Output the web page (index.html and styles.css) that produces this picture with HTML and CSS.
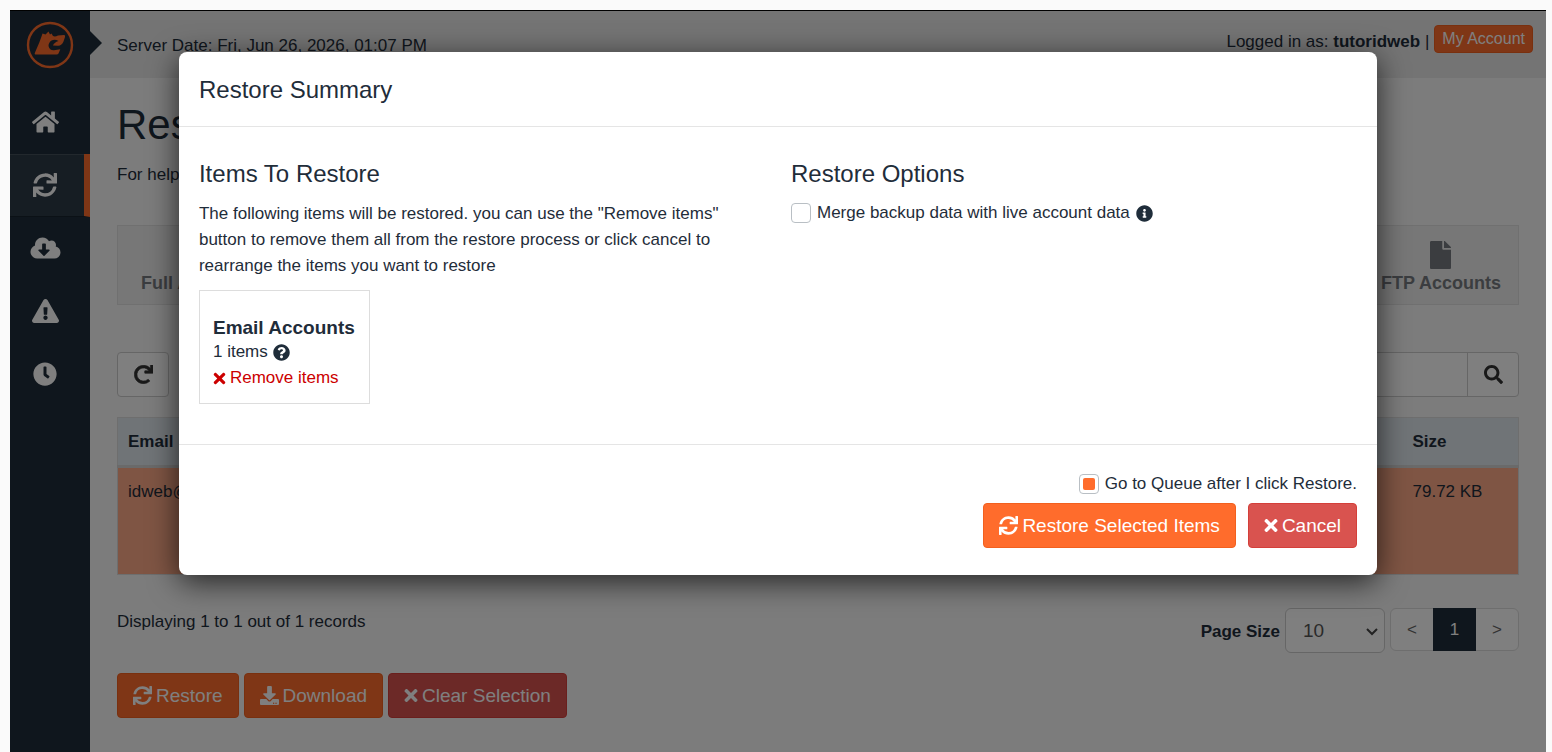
FILE: index.html
```
<!doctype html>
<html lang="en">
  <head>
    <meta charset="UTF-8" />
    <meta name="viewport" content="width=device-width, initial-scale=1.0" />
    <title>Restore &amp; Download</title>
    <link rel="stylesheet" href="styles.css">
  </head>
  <body>
    <!-- Shared icons -->
    <svg class="sprite" aria-hidden="true">
      <symbol id="i-home" viewBox="0 0 576 512"><path d="M280.37 148.26L96 300.11V464a16 16 0 0 0 16 16l112.06-.29a16 16 0 0 0 15.92-16V368a16 16 0 0 1 16-16h64a16 16 0 0 1 16 16v95.64a16 16 0 0 0 16 16.05L464 480a16 16 0 0 0 16-16V300L295.67 148.26a12.19 12.19 0 0 0-15.3 0zM571.6 251.47L488 182.56V44.05a12 12 0 0 0-12-12h-56a12 12 0 0 0-12 12v72.61L318.47 43a48 48 0 0 0-61 0L4.34 251.47a12 12 0 0 0-1.6 16.9l25.5 31A12 12 0 0 0 45.15 301l235.22-193.74a12.19 12.19 0 0 1 15.3 0L530.9 301a12 12 0 0 0 16.9-1.6l25.5-31a12 12 0 0 0-1.7-16.93z"/></symbol>
      <symbol id="i-sync" viewBox="0 0 512 512"><path d="M440.65 12.57l4 82.77A247.16 247.16 0 0 0 255.83 8C134.73 8 33.91 94.92 12.29 209.82A12 12 0 0 0 24.09 224h49.05a12 12 0 0 0 11.67-9.26 175.91 175.91 0 0 1 317-56.94l-101.46-4.86a12 12 0 0 0-12.57 12v47.41a12 12 0 0 0 12 12H500a12 12 0 0 0 12-12V12a12 12 0 0 0-12-12h-47.37a12 12 0 0 0-11.98 12.57zM255.83 432a175.61 175.61 0 0 1-146-77.8l101.8 4.87a12 12 0 0 0 12.57-12v-47.4a12 12 0 0 0-12-12H12a12 12 0 0 0-12 12V500a12 12 0 0 0 12 12h47.35a12 12 0 0 0 12-12.6l-4.15-82.57A247.17 247.17 0 0 0 255.83 504c121.11 0 221.93-86.92 243.55-201.82a12 12 0 0 0-11.8-14.18h-49.05a12 12 0 0 0-11.67 9.26A175.86 175.86 0 0 1 255.83 432z"/></symbol>
      <symbol id="i-cloud" viewBox="0 0 640 512"><path d="M537.6 226.6c4.1-10.7 6.4-22.4 6.4-34.6 0-53-43-96-96-96-19.7 0-38.1 6-53.3 16.2C367 64.2 315.3 32 256 32c-88.4 0-160 71.6-160 160 0 2.7.1 5.4.2 8.1C40.2 219.8 0 273.2 0 336c0 79.5 64.5 144 144 144h368c70.7 0 128-57.3 128-128 0-61.9-44-113.6-102.4-125.4zm-132.9 88.7L299.3 420.7c-6.2 6.2-16.4 6.2-22.6 0L171.3 315.3c-10.1-10.1-2.9-27.3 11.3-27.3H248V176c0-8.8 7.2-16 16-16h48c8.8 0 16 7.2 16 16v112h65.4c14.2 0 21.4 17.2 11.3 27.3z"/></symbol>
      <symbol id="i-alert" viewBox="0 0 576 512"><path d="M569.517 440.013C587.975 472.007 564.806 512 527.94 512H48.054c-36.937 0-59.999-40.055-41.577-71.987L246.423 23.985c18.467-32.009 64.72-31.951 83.154 0l239.94 416.028zM288 354c-25.405 0-46 20.595-46 46s20.595 46 46 46 46-20.595 46-46-20.595-46-46-46zm-43.673-165.346l7.418 136c.347 6.364 5.609 11.346 11.982 11.346h48.546c6.373 0 11.635-4.982 11.982-11.346l7.418-136c.375-6.874-5.098-12.654-11.982-12.654h-63.383c-6.884 0-12.356 5.78-11.981 12.654z"/></symbol>
      <symbol id="i-clock" viewBox="0 0 512 512"><path d="M256,8C119,8,8,119,8,256S119,504,256,504,504,393,504,256,393,8,256,8Zm92.49,313h0l-20,25a16,16,0,0,1-22.49,2.5h0l-67-49.72a40,40,0,0,1-15-31.23V112a16,16,0,0,1,16-16h32a16,16,0,0,1,16,16V256l58,42.5A16,16,0,0,1,348.49,321Z"/></symbol>
      <symbol id="i-redo" viewBox="0 0 512 512"><path d="M500.33 0h-47.41a12 12 0 0 0-12 12.57l4 82.76A247.42 247.42 0 0 0 256 8C119.34 8 7.9 119.53 8 256.19 8.1 393.07 119.1 504 256 504a247.1 247.1 0 0 0 166.18-63.91 12 12 0 0 0 .48-17.43l-34-34a12 12 0 0 0-16.38-.55A176 176 0 1 1 402.1 157.8l-101.53-4.87a12 12 0 0 0-12.57 12v47.41a12 12 0 0 0 12 12h200.33a12 12 0 0 0 12-12V12a12 12 0 0 0-12-12z" stroke="currentColor" stroke-width="16"/></symbol>
      <symbol id="i-file" viewBox="0 0 384 512"><path d="M224 136V0H24C10.7 0 0 10.7 0 24v464c0 13.3 10.7 24 24 24h336c13.3 0 24-10.7 24-24V160H248c-13.2 0-24-10.8-24-24zm160-14.1v6.1H256V0h6.1c6.4 0 12.5 2.5 17 7l97.9 98c4.5 4.5 7 10.6 7 16.9z"/></symbol>
      <symbol id="i-search" viewBox="0 0 512 512"><path d="M505 442.7L405.3 343c-4.5-4.5-10.6-7-17-7H372c27.6-35.3 44-79.7 44-128C416 93.1 322.9 0 208 0S0 93.1 0 208s93.1 208 208 208c48.3 0 92.7-16.4 128-44v16.3c0 6.4 2.5 12.5 7 17l99.7 99.7c9.4 9.4 24.6 9.4 33.9 0l28.3-28.3c9.4-9.4 9.4-24.6.1-34zM208 336c-70.7 0-128-57.2-128-128 0-70.7 57.2-128 128-128 70.7 0 128 57.2 128 128 0 70.7-57.2 128-128 128z"/></symbol>
      <symbol id="i-times" viewBox="0 0 352 512"><path d="M242.72 256l100.07-100.07c12.28-12.28 12.28-32.19 0-44.48l-22.24-22.24c-12.28-12.28-32.19-12.28-44.48 0L176 189.28 75.93 89.21c-12.28-12.28-32.19-12.28-44.48 0L9.21 111.45c-12.28 12.28-12.28 32.19 0 44.48L109.28 256 9.21 356.07c-12.28 12.28-12.28 32.19 0 44.48l22.24 22.24c12.28 12.28 32.2 12.28 44.48 0L176 322.72l100.07 100.07c12.28 12.28 32.2 12.28 44.48 0l22.24-22.24c12.28-12.28 12.28-32.19 0-44.48L242.72 256z"/></symbol>
      <symbol id="i-download" viewBox="0 0 512 512"><path d="M216 0h80c13.3 0 24 10.7 24 24v168h87.7c17.8 0 26.7 21.5 14.1 34.1L269.7 378.3c-7.5 7.5-19.8 7.5-27.3 0L90.1 226.1c-12.6-12.6-3.7-34.1 14.1-34.1H192V24c0-13.3 10.7-24 24-24zm296 376v112c0 13.3-10.7 24-24 24H24c-13.3 0-24-10.7-24-24V376c0-13.3 10.7-24 24-24h146.7l49 49c20.1 20.1 52.5 20.1 72.6 0l49-49H488c13.3 0 24 10.7 24 24zm-124 88c0-11-9-20-20-20s-20 9-20 20 9 20 20 20 20-9 20-20zm64 0c0-11-9-20-20-20s-20 9-20 20 9 20 20 20 20-9 20-20z"/></symbol>
      <symbol id="i-question" viewBox="0 0 512 512"><path d="M504 256c0 136.997-111.043 248-248 248S8 392.997 8 256C8 119.083 119.043 8 256 8s248 111.083 248 248zM262.655 90c-54.497 0-89.255 22.957-116.549 63.758-3.536 5.286-2.353 12.415 2.715 16.258l34.699 26.31c5.205 3.947 12.621 3.008 16.665-2.122 17.864-22.658 30.113-35.797 57.303-35.797 20.429 0 45.698 13.148 45.698 32.958 0 14.976-12.363 22.667-32.534 33.976C247.128 238.528 216 254.941 216 296v4c0 6.627 5.373 12 12 12h56c6.627 0 12-5.373 12-12v-1.333c0-28.462 83.186-29.647 83.186-106.667 0-58.002-60.165-102-116.531-102zM256 338c-25.365 0-46 20.635-46 46 0 25.364 20.635 46 46 46s46-20.636 46-46c0-25.365-20.635-46-46-46z"/></symbol>
      <symbol id="i-info" viewBox="0 0 512 512"><path d="M256 8C119.043 8 8 119.083 8 256c0 136.997 111.043 248 248 248s248-111.003 248-248C504 119.083 392.957 8 256 8zm0 110c23.196 0 42 18.804 42 42s-18.804 42-42 42-42-18.804-42-42 18.804-42 42-42zm56 254c0 6.627-5.373 12-12 12h-88c-6.627 0-12-5.373-12-12v-24c0-6.627 5.373-12 12-12h12v-64h-12c-6.627 0-12-5.373-12-12v-24c0-6.627 5.373-12 12-12h64c6.627 0 12 5.373 12 12v100h12c6.627 0 12 5.373 12 12v24z"/></symbol>
    </svg>

    <div class="app">
      <nav class="sidebar">
        <a href="#" class="logo" aria-label="JetBackup">
          <svg viewBox="0 0 48 48" width="48" height="48">
            <circle cx="24" cy="24" r="22" fill="none" stroke="#ff6c2c" stroke-width="2.4"/>
            <path fill="#ff6c2c" d="M10 33.500Q8 33.500 9 31.500L13.300 21.500L15.500 15.500L16.500 12.500L19.500 13.500L22.500 10.500L24 13.500L25.500 12.500L27 15Q29 16 32 14.500L38 14Q39.500 14 39 16L37.500 20.500Q36 24.500 32 24.800L27 24.500Q28 21.500 32.500 20Q29 18 25.500 19.500Q22.500 21.500 22.500 25Q23.500 29.500 28 29.200L34.300 28.200L32.500 32.500Q32 33.500 30.500 33.500Z"/>
          </svg>
        </a>
        <a href="#" class="side-link" aria-label="Home"><svg class="icon wide"><use href="#i-home"/></svg></a>
        <a href="#" class="side-link active" aria-label="Restore"><svg class="icon"><use href="#i-sync"/></svg></a>
        <a href="#" class="side-link" aria-label="Downloads"><svg class="icon wider"><use href="#i-cloud"/></svg></a>
        <a href="#" class="side-link" aria-label="Alerts"><svg class="icon wide"><use href="#i-alert"/></svg></a>
        <a href="#" class="side-link" aria-label="Queue"><svg class="icon"><use href="#i-clock"/></svg></a>
      </nav>

      <div class="main">
        <header class="topbar">
          <span class="date">Server Date: Fri, Jun 26, 2026, 01:07 PM</span>
          <div class="user">
            <span>Logged in as: <strong>tutoridweb</strong> |</span>
            <a href="#" class="account">My Account</a>
          </div>
        </header>

        <div class="content">
          <h1>Restore</h1>
          <p class="help">For help</p>

          <div class="tabs">
            <a href="#" class="tab">Full A</a>
            <a href="#" class="tab"><svg class="tab-icon"><use href="#i-file"/></svg>FTP Accounts</a>
          </div>

          <div class="toolbar">
            <button class="tool" aria-label="Reload"><svg class="icon-md"><use href="#i-redo"/></svg></button>
            <div class="search">
              <input type="text" aria-label="Search">
              <button aria-label="Search"><svg class="icon-md"><use href="#i-search"/></svg></button>
            </div>
          </div>

          <table class="records">
            <thead>
              <tr><th>Email</th><th class="size">Size</th></tr>
            </thead>
            <tbody>
              <tr><td>idweb@</td><td>79.72 KB</td></tr>
            </tbody>
          </table>

          <div class="table-footer">
            <p class="count">Displaying 1 to 1 out of 1 records</p>
            <div class="paging">
              <label for="pageSize">Page Size</label>
              <div class="select">
                <select id="pageSize"><option>10</option></select>
                <svg viewBox="0 0 12 12" width="12" height="12"><path d="M1 3l5 5 5-5" fill="none" stroke="#444" stroke-width="2"/></svg>
              </div>
              <div class="pager">
                <button aria-label="Previous">&lt;</button>
                <button class="current">1</button>
                <button aria-label="Next">&gt;</button>
              </div>
            </div>
          </div>

          <div class="actions">
            <button class="btn"><svg class="icon-md"><use href="#i-sync"/></svg>Restore</button>
            <button class="btn"><svg class="icon-md"><use href="#i-download"/></svg>Download</button>
            <button class="btn danger"><svg class="icon-x"><use href="#i-times"/></svg>Clear Selection</button>
          </div>
        </div>
      </div>

      <div class="overlay">
        <div class="modal" role="dialog" aria-labelledby="modalTitle">
          <div class="modal-header">
            <h2 id="modalTitle">Restore Summary</h2>
          </div>
          <div class="modal-body">
            <section>
              <h2>Items To Restore</h2>
              <p class="intro">The following items will be restored. you can use the "Remove items" button to remove them all from the restore process or click cancel to rearrange the items you want to restore</p>
              <div class="item-box">
                <h3>Email Accounts</h3>
                <div class="item-count">1 items <svg class="icon-sm"><use href="#i-question"/></svg></div>
                <a href="#" class="remove"><svg class="icon-xs"><use href="#i-times"/></svg>Remove items</a>
              </div>
            </section>
            <section>
              <h2>Restore Options</h2>
              <label class="check"><input type="checkbox">Merge backup data with live account data <svg class="icon-sm"><use href="#i-info"/></svg></label>
            </section>
          </div>
          <div class="modal-footer">
            <label class="check"><input type="checkbox" checked>Go to Queue after I click Restore.</label>
            <div class="modal-buttons">
              <button class="btn"><svg class="icon-md"><use href="#i-sync"/></svg>Restore Selected Items</button>
              <button class="btn danger"><svg class="icon-x"><use href="#i-times"/></svg>Cancel</button>
            </div>
          </div>
        </div>
      </div>
    </div>
  </body>
</html>
```
FILE: styles.css
```
* {
  box-sizing: border-box;
}
body {
  margin: 0;
  padding: 10px 6px 0 10px;
  background: #fafafa;
  color: #1f2d3a;
  font: 17px/26px "Liberation Sans", Arial, sans-serif;
}
h1,
h2,
h3,
p {
  margin: 0;
  font-weight: normal;
}
a {
  color: inherit;
  text-decoration: none;
}
button,
input,
select {
  font: inherit;
  color: inherit;
}
svg {
  fill: currentColor;
  flex-shrink: 0;
}
.sprite {
  display: none;
}
.app {
  position: relative;
  display: flex;
  min-height: calc(100vh - 10px);
  border-top: 1px solid #000;
  background: #f8f8f8;
}

/* Sidebar */
.sidebar {
  width: 80px;
  background: #1f2d3a;
  color: #fff;
}
.logo {
  display: block;
  position: relative;
  height: 80px;
  padding: 10px 16px;
}
.logo::after {
  content: "";
  position: absolute;
  left: 80px;
  top: 20px;
  border: 12px solid transparent;
  border-left-color: #1f2d3a;
  border-right: 0;
}
.side-link {
  display: flex;
  align-items: center;
  justify-content: center;
  height: 63px;
  padding: 0 10px 1px 0;
  border-bottom: 1px solid transparent;
}
.side-link.active {
  padding-right: 4px;
  border-right: 6px solid #ff6c2c;
  border-bottom-color: #17222c;
  background: #2d3a46;
  box-shadow: inset 0 1px #44505a;
}
.icon {
  width: 24px;
  height: 24px;
}
.icon.wide {
  width: 27px;
}
.icon.wider {
  width: 31px;
}
.icon-md {
  width: 19px;
  height: 19px;
}
.icon-x {
  width: 14px;
  height: 19px;
}
.icon-sm {
  width: 17px;
  height: 17px;
}
.icon-xs {
  width: 13px;
  height: 17px;
}

/* Page */
.main {
  flex: 1;
  min-width: 0;
}
.topbar {
  display: flex;
  align-items: flex-start;
  justify-content: space-between;
  height: 67px;
  padding: 14px 13px 0 27px;
  background: #e9e9e9;
}
.date {
  padding-top: 8px;
}
.user {
  display: flex;
  align-items: flex-start;
  gap: 5px;
  line-height: 34px;
}
.account {
  padding: 0 7px;
  border: 1px solid #f2601f;
  border-radius: 4px;
  background: #ff6c2c;
  color: #fff;
  font-size: 16px;
  line-height: 26px;
}
.content {
  padding: 20px 27px;
}
h1 {
  font-size: 42px;
  line-height: 54px;
}
.help {
  margin-top: 10px;
}
.tabs {
  display: flex;
  justify-content: space-between;
  height: 80px;
  margin: 37px 0 47px;
  padding: 0 17px 0 23px;
  border: 1px solid #e0e0e0;
  background: #efefef;
  color: #777b80;
  font-size: 18px;
  font-weight: bold;
}
.tab {
  display: flex;
  flex-direction: column;
  align-items: center;
  justify-content: flex-end;
  padding-bottom: 8px;
}
.tab-icon {
  width: 21px;
  height: 28px;
  margin-bottom: 1px;
}
.toolbar {
  display: flex;
  justify-content: space-between;
  margin-bottom: 20px;
}
.tool,
.search {
  height: 45px;
  border: 1px solid #ccc;
  border-radius: 4px;
  background: #fff;
  color: #333;
}
.tool {
  width: 52px;
}
.tool svg,
.search svg {
  display: block;
  margin: auto;
}
.search {
  display: flex;
  width: 400px;
}
.search input {
  flex: 1;
  border: 0;
  background: transparent;
}
.search button {
  width: 51px;
  border: 0;
  border-left: 1px solid #ccc;
  background: transparent;
}
.records {
  width: 100%;
  border: 1px solid #ddd;
  border-collapse: collapse;
  text-align: left;
}
.records th {
  height: 49px;
  padding: 0 10px;
  border-bottom: 3px solid #d5d5d5;
  background: #e1e8ee;
}
.records td {
  height: 108px;
  padding: 11px 10px;
  background: #ffaa88;
  vertical-align: top;
}
.size {
  width: 116px;
}
.table-footer {
  display: flex;
  justify-content: space-between;
  margin: 33px 0 20px;
}
.count {
  padding-top: 1px;
}
.paging {
  display: flex;
  align-items: flex-start;
  gap: 5px;
}
.paging label {
  padding-top: 11px;
  font-weight: bold;
}
.select {
  position: relative;
}
.select select {
  appearance: none;
  width: 100px;
  height: 45px;
  padding: 0 17px;
  border: 1px solid #ccc;
  border-radius: 6px;
  background: #fff;
  color: #555;
  font-size: 19px;
}
.select svg {
  position: absolute;
  right: 7px;
  top: 18px;
}
.pager {
  display: flex;
  height: 43px;
  border: 1px solid #ddd;
  border-radius: 6px;
  background: #fff;
}
.pager button {
  width: 42px;
  padding: 0;
  border: 0;
  background: transparent;
  color: #666;
}
.pager .current {
  width: 43px;
  margin: -1px 0;
  background: #1f2d3a;
  color: #fff;
}
.actions {
  display: flex;
  gap: 5px;
}
.btn {
  display: flex;
  align-items: center;
  gap: 4px;
  height: 45px;
  padding: 0 15px;
  border: 1px solid #f2601f;
  border-radius: 4px;
  background: #ff6c2c;
  color: #fff;
  font-size: 19px;
}
.btn.danger {
  border-color: #d43f3a;
  background: #d9534f;
}

/* Modal */
.overlay {
  position: absolute;
  inset: -1px 0 0;
  padding-top: 42px;
  background: rgba(0, 0, 0, 0.5);
}
.modal {
  width: 78%;
  margin: 0 auto;
  border-radius: 8px;
  background: #fff;
  box-shadow: 0 7px 30px rgba(0, 0, 0, 0.7);
}
.modal h2 {
  font-size: 24px;
  line-height: 34px;
}
.modal-header {
  padding: 21px 20px 19px;
  border-bottom: 1px solid #e5e5e5;
}
.modal-body {
  display: grid;
  grid-template-columns: 1fr 1fr;
  gap: 26px;
  padding: 30px 20px 40px;
}
.intro {
  margin: 10px 0 11px;
}
.item-box {
  display: inline-block;
  padding: 26px 14px 12px 13px;
  border: 1px solid #ddd;
  vertical-align: top;
}
.item-box h3 {
  font-size: 19px;
  font-weight: bold;
  line-height: 22px;
}
.item-count,
.remove,
.check {
  display: flex;
  align-items: center;
  gap: 5px;
}
.remove {
  gap: 4px;
  color: #c00;
}
.check {
  gap: 6px;
}
section .check {
  margin-top: 9px;
}
.check input {
  appearance: none;
  width: 20px;
  height: 20px;
  margin: 0;
  border: 1px solid #b9bfc4;
  border-radius: 4px;
  background: #fff;
}
.check input:checked::before {
  content: "";
  display: block;
  width: 12px;
  height: 12px;
  margin: 3px;
  border-radius: 2px;
  background: #ff6c2c;
}
.modal-footer {
  display: flex;
  flex-direction: column;
  align-items: flex-end;
  gap: 6px;
  padding: 26px 20px 27px;
  border-top: 1px solid #e5e5e5;
}
.modal-buttons {
  display: flex;
  gap: 12px;
}
```
